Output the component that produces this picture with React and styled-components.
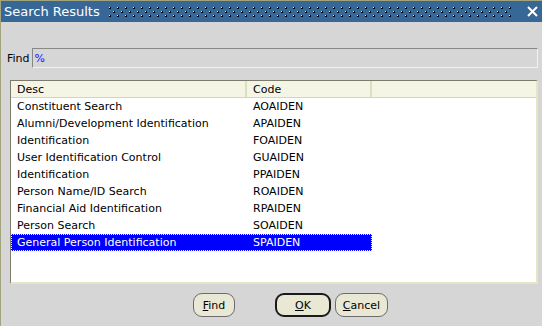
import React from 'react'
import styled, { createGlobalStyle } from 'styled-components'

const GlobalStyle = createGlobalStyle`
  html, body {
    margin: 0;
    padding: 0;
    background: #d6d6d6;
  }
`

const rows = [
  { desc: 'Constituent Search', code: 'AOAIDEN' },
  { desc: 'Alumni/Development Identification', code: 'APAIDEN' },
  { desc: 'Identification', code: 'FOAIDEN' },
  { desc: 'User Identification Control', code: 'GUAIDEN' },
  { desc: 'Identification', code: 'PPAIDEN' },
  { desc: 'Person Name/ID Search', code: 'ROAIDEN' },
  { desc: 'Financial Aid Identification', code: 'RPAIDEN' },
  { desc: 'Person Search', code: 'SOAIDEN' },
  { desc: 'General Person Identification', code: 'SPAIDEN', selected: true },
]

const Window = styled.div`
  width: 541px;
  height: 325px;
  border-left: 1px solid #a4a47c;
  border-top: 1px solid #a4a47c;
  background: #d6d6d6;
  display: flex;
  flex-direction: column;
  font-family: 'DejaVu Sans', Verdana, sans-serif;
  font-size: 11px;
  color: #000;
`

const TitleBar = styled.div`
  height: 21px;
  background: #376797;
  display: flex;
  align-items: center;
  padding: 0 4px 0 3px;
  gap: 8px;
`

const Title = styled.span`
  color: #fff;
  font-size: 13px;
  white-space: nowrap;
`

const Grip = styled.svg`
  flex: 1;
  height: 12px;
`

const CloseIcon = styled.svg`
  width: 11px;
  height: 11px;
  margin-left: 6px;
`

const FindRow = styled.div`
  display: flex;
  align-items: center;
  margin: 26px 4px 0 6px;
  gap: 2px;
`

const FindLabel = styled.span`
  font-size: 11px;
`

const FindInput = styled.div`
  flex: 1;
  height: 18px;
  border-top: 1px solid #888;
  border-left: 1px solid #888;
  border-bottom: 1px solid #f4f4dc;
  border-right: 1px solid #f4f4dc;
  color: #1414ff;
  padding-left: 2px;
  display: flex;
  align-items: center;
`

const ListBox = styled.div`
  margin: 12px 4px 0 9px;
  height: 201px;
  background: #fff;
  border-top: 1px solid #7c7c6c;
  border-left: 1px solid #7c7c6c;
  border-right: 2px solid #e6e6c4;
  border-bottom: 2px solid #e6e6c4;
  display: flex;
  flex-direction: column;
`

const Row = styled.div`
  display: grid;
  grid-template-columns: 236px 125px 1fr;
  height: ${(p) => (p.header ? '16px' : '17px')};
  align-items: center;
  background: ${(p) => (p.header ? '#f5f5e6' : p.selected ? '#0000ff' : 'transparent')};
  color: ${(p) => (p.selected ? '#fff' : '#000')};
  border-bottom: ${(p) => (p.header ? '1px solid #d6d6b4' : 'none')};
  outline: ${(p) => (p.selected ? '1px dotted #ffff80' : 'none')};
  outline-offset: -1px;
  width: ${(p) => (p.selected ? '361px' : 'auto')};
`

const Cell = styled.div`
  padding-left: ${(p) => (p.code ? '6px' : '6px')};
  height: 100%;
  display: flex;
  align-items: center;
  white-space: nowrap;
  border-right: ${(p) => (p.divider ? '2px solid #dedec0' : 'none')};
`

const ButtonRow = styled.div`
  display: flex;
  margin: 9px 0 0 192px;
`

const Button = styled.button`
  height: 24px;
  width: ${(p) => p.w}px;
  margin-left: ${(p) => p.gap || 0}px;
  border: ${(p) => (p.primary ? '2px solid #1a1a1a' : '1px solid #6c6c6c')};
  border-radius: 9px;
  background: #e8e8d4;
  font-family: 'DejaVu Sans', Verdana, sans-serif;
  font-size: 11px;
  color: #000;
  padding: 0;
  u {
    text-decoration: underline;
  }
`

function GripPattern() {
  return (
    <Grip>
      <defs>
        <pattern id="grip" width="8" height="8" patternUnits="userSpaceOnUse">
          <rect x="1" y="1" width="1" height="1" fill="#f0f0c8" />
          <rect x="2" y="1" width="1" height="2" fill="#000" />
          <rect x="1" y="2" width="1" height="1" fill="#000" />
          <rect x="5" y="5" width="1" height="1" fill="#f0f0c8" />
          <rect x="6" y="5" width="1" height="2" fill="#000" />
          <rect x="5" y="6" width="1" height="1" fill="#000" />
        </pattern>
      </defs>
      <rect x="0" y="0" width="100%" height="12" fill="url(#grip)" />
    </Grip>
  )
}

export default function App() {
  return (
    <>
      <GlobalStyle />
      <Window>
        <TitleBar>
          <Title>Search Results</Title>
          <GripPattern />
          <CloseIcon viewBox="0 0 11 11">
            <path d="M1 1 L10 10 M10 1 L1 10" stroke="#fff" strokeWidth="2" />
          </CloseIcon>
        </TitleBar>
        <FindRow>
          <FindLabel>Find</FindLabel>
          <FindInput>%</FindInput>
        </FindRow>
        <ListBox>
          <Row header>
            <Cell divider>Desc</Cell>
            <Cell divider>Code</Cell>
            <Cell />
          </Row>
          {rows.map((r, i) => (
            <Row key={i} selected={r.selected}>
              <Cell>{r.desc}</Cell>
              <Cell>{r.code}</Cell>
            </Row>
          ))}
        </ListBox>
        <ButtonRow>
          <Button w={42}>
            <u>F</u>ind
          </Button>
          <Button w={56} gap={40} primary>
            <u>O</u>K
          </Button>
          <Button w={53} gap={4}>
            <u>C</u>ancel
          </Button>
        </ButtonRow>
      </Window>
    </>
  )
}
